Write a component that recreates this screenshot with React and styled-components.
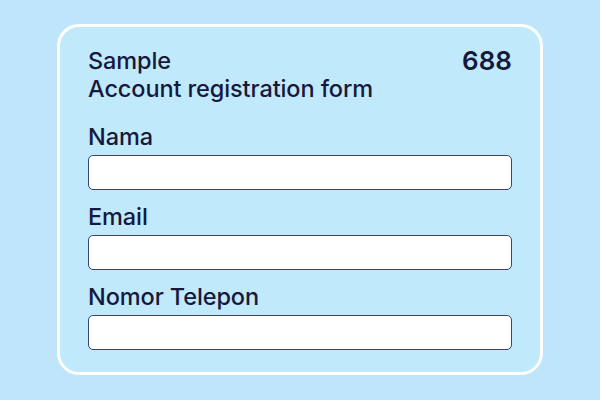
import styled, { createGlobalStyle } from "styled-components";

const GlobalStyle = createGlobalStyle`
  html, body {
    margin: 0;
    padding: 0;
    background: #bee5f9;
    font-family: Inter, "Noto Sans", sans-serif;
  }
`;

const Page = styled.div`
  width: 600px;
  height: 400px;
  box-sizing: border-box;
  padding: 24px 57px 0 57px;
`;

const Card = styled.div`
  box-sizing: border-box;
  width: 486px;
  height: 351px;
  border: 3px solid #ffffff;
  border-radius: 22px;
  background: #c1e9fc;
  padding: 20px 28px 0 28px;
  color: #16183c;
`;

const Header = styled.div`
  display: flex;
  justify-content: space-between;
  align-items: flex-start;
  margin-bottom: 20px;
`;

const Title = styled.div`
  font-size: 23.5px;
  line-height: 28px;
  font-weight: 500;
  letter-spacing: -0.1px;
`;

const Count = styled.div`
  font-size: 26px;
  line-height: 28px;
  font-weight: 600;
  letter-spacing: 0;
`;

const Field = styled.div`
  display: flex;
  flex-direction: column;
  gap: 4px;
  margin-bottom: 13px;
`;

const Label = styled.label`
  font-size: 23.5px;
  line-height: 28px;
  font-weight: 500;
  letter-spacing: -0.1px;
`;

const Input = styled.input`
  box-sizing: border-box;
  width: 100%;
  height: 35px;
  border: 1.5px solid #3d4371;
  border-radius: 5px;
  background: #ffffff;
  outline: none;
  padding: 0 10px;
  font-size: 16px;
`;

export default function App() {
  const fields = ["Nama", "Email", "Nomor Telepon"];
  return (
    <>
      <GlobalStyle />
      <Page>
        <Card>
          <Header>
            <div>
              <Title>Sample</Title>
              <Title>Account registration form</Title>
            </div>
            <Count>688</Count>
          </Header>
          {fields.map((f) => (
            <Field key={f}>
              <Label>{f}</Label>
              <Input type="text" />
            </Field>
          ))}
        </Card>
      </Page>
    </>
  );
}
